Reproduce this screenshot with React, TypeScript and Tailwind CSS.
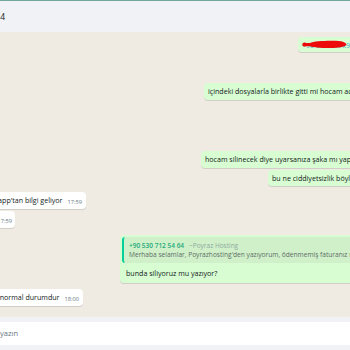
export default function App() {
  const bubbleOut =
    "shrink-0 whitespace-nowrap bg-[#d9fdd3] rounded-[4px] shadow-[0_1px_0.5px_rgba(11,20,26,0.13)]";
  const bubbleIn =
    "shrink-0 whitespace-nowrap bg-white rounded-[4px] shadow-[0_1px_0.5px_rgba(11,20,26,0.13)]";
  return (
    <div className="w-[350px] h-[350px] overflow-hidden flex flex-col bg-[#efeae2] font-['Open_Sans',sans-serif] text-[#111b21]">
      <div className="h-[1px] shrink-0 bg-[#6fa89d]" />
      <header className="h-[31px] shrink-0 bg-[#f0f2f5] flex items-center">
        <div className="w-[5px] flex justify-end">
          <span className="shrink-0 whitespace-nowrap text-[8.5px] leading-[12px]">+90 530 712 54 64</span>
        </div>
      </header>

      <main className="flex-1 min-h-0 flex flex-col overflow-hidden text-[7.1px]">
        {/* b1 */}
        <div className="mt-[5px] pl-[298px] flex">
          <div className={`${bubbleOut} relative h-[15px] pl-[4px] pr-[4px] flex items-center`}>
            <span className="text-[#3fa9c4] leading-[10px]">+90 5xx xxx x9 09</span>
            <svg
              className="absolute left-[4px] top-[3px]"
              width="45"
              height="9"
              viewBox="0 0 45 9"
            >
              <path
                d="M0.3,4.5 C0.3,2.6 2.5,2 4,2.9 L8,3 C12,1 28,0.4 37,1.1 C41.5,1.6 44.8,3.2 44.3,5 C42.8,7 36,7.8 29,8 C20,8.2 12,7.4 8,6.2 L4.4,6.2 C2.2,6.9 0.3,6.4 0.3,4.5 Z"
                fill="#ec0a0a"
              />
            </svg>
          </div>
        </div>

        {/* b2 */}
        <div className="mt-[31px] pl-[204px] flex">
          <div className={`${bubbleOut} pt-[3px] pb-[4px] pl-[4px] pr-[6px] leading-[10px]`}>
            içindeki dosyalarla birlikte gitti mi hocam acaba
          </div>
        </div>

        {/* b3 */}
        <div className="mt-[51px] pl-[201px] flex">
          <div className={`${bubbleOut} pt-[3px] pb-[4px] pl-[4px] pr-[6px] leading-[10px]`}>
            hocam silinecek diye uyarsanıza şaka mı yapıyorsunuz
          </div>
        </div>

        {/* b4 */}
        <div className="mt-[2px] pl-[268px] flex">
          <div className={`${bubbleOut} pt-[3px] pb-[3px] pl-[4px] pr-[6px] leading-[10px]`}>
            bu ne ciddiyetsizlik böyle
          </div>
        </div>

        {/* b5 */}
        <div className="mt-[6px] w-[86px] flex justify-end">
          <div className={`${bubbleIn} pt-[3px] pb-[4px] pl-[6px] pr-[4px] flex items-end leading-[10px]`}>
            <span>Whatsapp'tan bilgi geliyor</span>
            <span className="ml-[5px] text-[5.7px] leading-[8px] text-[#667781] translate-y-[1px]">17:59</span>
          </div>
        </div>

        {/* b6 */}
        <div className="mt-[2px] w-[15px] flex justify-end">
          <div className={`${bubbleIn} pt-[3px] pb-[4px] pl-[6px] pr-[3px] flex items-end leading-[10px]`}>
            <span>Tamam hocam</span>
            <span className="ml-[5px] text-[5.7px] leading-[8px] text-[#667781] translate-y-[1px]">17:59</span>
          </div>
        </div>

        {/* b7 */}
        <div className="mt-[7px] pl-[120px] flex">
          <div className={`${bubbleOut} p-[2px] flex flex-col`}>
            <div className="bg-[#d0f0ca] rounded-[3px] border-l-[2px] border-[#06cf9c] pl-[5px] pr-[6px] pt-[4px] pb-[4px] flex flex-col">
              <div className="leading-[9px] text-[6.5px]">
                <span className="text-[#1fa97a] font-semibold">+90 530 712 54 64</span>
                <span className="ml-[5px] text-[#8fab9e]">~Poyraz Hosting</span>
              </div>
              <div className="leading-[9px] text-[6.6px] text-[#5e6e66]">
                Merhaba selamlar, Poyrazhosting'den yazıyorum, ödenmemiş faturanız nedeniyle hizmetiniz
              </div>
            </div>
            <div className="pl-[4px] pt-[5px] pb-[3px] leading-[10px]">bunda siliyoruz mu yazıyor?</div>
          </div>
        </div>

        {/* b8 */}
        <div className="mt-[6px] w-[83px] flex justify-end">
          <div className={`${bubbleIn} pt-[3px] pb-[4px] pl-[6px] pr-[4px] flex items-end leading-[10px]`}>
            <span>bu normal durumdur</span>
            <span className="ml-[5px] text-[5.7px] leading-[8px] text-[#667781] translate-y-[1px]">18:00</span>
          </div>
        </div>
      </main>

      <footer className="h-[33px] shrink-0 bg-[#f0f2f5] pt-[5px] pb-[5px] flex">
        <div className="flex-1 bg-white flex items-center">
          <div className="w-[18px] flex justify-end">
            <span className="shrink-0 whitespace-nowrap text-[7.5px] text-[#667781]">Bir mesaj yazın</span>
          </div>
        </div>
      </footer>
    </div>
  );
}
